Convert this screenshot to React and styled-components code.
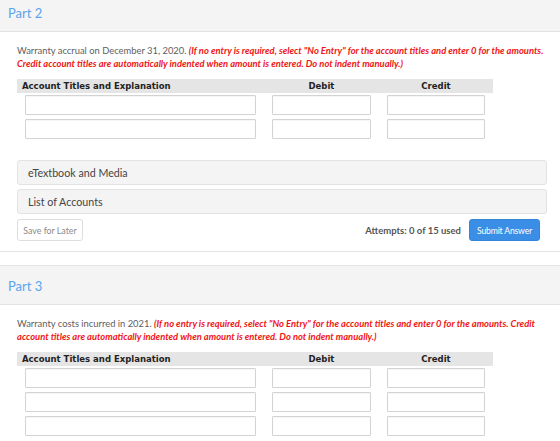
import React from "react";
import styled, { createGlobalStyle } from "styled-components";

const GlobalStyle = createGlobalStyle`
  html, body {
    margin: 0;
    padding: 0;
    background: #ffffff;
    font-family: Lato, "Open Sans", sans-serif;
  }
  * { box-sizing: border-box; }
`;

const Page = styled.div`
  width: 560px;
  overflow: hidden;
`;

const Section = styled.section`
  border-bottom: 1px solid #e2e2e2;
  margin-top: ${(p) => (p.first ? "-7px" : "13px")};
  border-top: ${(p) => (p.first ? "none" : "1px solid #e2e2e2")};
`;

const PartHeader = styled.div`
  height: 39px;
  background: #f4f4f4;
  border-bottom: 1px solid #e2e2e2;
  display: flex;
  align-items: center;
  padding-left: 8px;
  padding-top: 1px;
  color: #5aa5ec;
  font-size: 13px;
`;

const Body = styled.div`
  padding: 10px 13px 10px 17px;
`;

const Prompt = styled.p`
  margin: 0;
  padding-top: 2px;
  font-size: 9.4px;
  line-height: 13px;
  color: #5e5e5e;
  white-space: nowrap;
`;

const Note = styled.span`
  color: #f01515;
  font-style: italic;
  font-weight: 700;
`;

const Table = styled.div`
  margin-top: 9px;
  display: grid;
  grid-template-columns: 247px 115px 114px;
  row-gap: 4px;
`;

const HeadCell = styled.div`
  height: 14px;
  background: #e5e5e5;
  font-family: "DejaVu Sans", Verdana, sans-serif;
  font-weight: 700;
  font-size: 8.5px;
  line-height: 15px;
  color: #222222;
  text-align: ${(p) => (p.left ? "left" : "center")};
  padding-left: ${(p) => (p.left ? "5px" : "0")};
  margin-bottom: -2px;
`;

const Cell = styled.div`
  padding: 0 8px;
`;

const Field = styled.input`
  display: block;
  width: 100%;
  height: 20px;
  border: 1px solid #d3d3d3;
  border-radius: 1px;
  background: #ffffff;
  box-shadow: inset 0 1px 1px rgba(0, 0, 0, 0.04);
  outline: none;
`;

const Panels = styled.div`
  margin-top: 21px;
  display: flex;
  flex-direction: column;
  gap: 4px;
`;

const Panel = styled.div`
  height: 25px;
  background: #f4f4f4;
  border: 1px solid #e3e3e3;
  border-radius: 3px;
  display: flex;
  align-items: center;
  padding-left: 10px;
  font-size: 10.7px;
  color: #444444;
`;

const Footer = styled.div`
  margin-top: 5px;
  display: flex;
  align-items: center;
  padding-right: 7px;
`;

const SaveButton = styled.button`
  height: 22px;
  width: 66px;
  padding: 0;
  background: #ffffff;
  border: 1px solid #dddddd;
  border-radius: 3px;
  font-family: Lato, sans-serif;
  font-size: 8.8px;
  color: #8a8a8a;
`;

const Attempts = styled.span`
  margin-left: auto;
  margin-right: 8px;
  font-size: 9.5px;
  font-weight: 700;
  color: #555555;
`;

const SubmitButton = styled.button`
  height: 22px;
  width: 71px;
  padding: 0;
  background: #3a8ee6;
  border: 1px solid #3486dc;
  border-radius: 3px;
  font-family: Lato, sans-serif;
  font-size: 8.7px;
  color: #ffffff;
  letter-spacing: -0.2px;
`;

function EntryTable({ rows }) {
  return (
    <Table>
      <HeadCell left>Account Titles and Explanation</HeadCell>
      <HeadCell>Debit</HeadCell>
      <HeadCell>Credit</HeadCell>
      {Array.from({ length: rows }).map((_, i) => (
        <React.Fragment key={i}>
          <Cell><Field /></Cell>
          <Cell><Field /></Cell>
          <Cell><Field /></Cell>
        </React.Fragment>
      ))}
    </Table>
  );
}

export default function App() {
  return (
    <Page>
      <GlobalStyle />
      <Section first>
        <PartHeader>Part 2</PartHeader>
        <Body>
          <Prompt>
            Warranty accrual on December 31, 2020.{" "}
            <Note>
              (If no entry is required, select "No Entry" for the account titles and enter 0 for the amounts.
              <br />
              Credit account titles are automatically indented when amount is entered. Do not indent manually.)
            </Note>
          </Prompt>
          <EntryTable rows={2} />
          <Panels>
            <Panel>eTextbook and Media</Panel>
            <Panel>List of Accounts</Panel>
          </Panels>
          <Footer>
            <SaveButton>Save for Later</SaveButton>
            <Attempts>Attempts: 0 of 15 used</Attempts>
            <SubmitButton>Submit Answer</SubmitButton>
          </Footer>
        </Body>
      </Section>
      <Section>
        <PartHeader>Part 3</PartHeader>
        <Body>
          <Prompt>
            Warranty costs incurred in 2021.{" "}
            <Note>
              (If no entry is required, select "No Entry" for the account titles and enter 0 for the amounts. Credit
              <br />
              account titles are automatically indented when amount is entered. Do not indent manually.)
            </Note>
          </Prompt>
          <EntryTable rows={3} />
        </Body>
      </Section>
    </Page>
  );
}
